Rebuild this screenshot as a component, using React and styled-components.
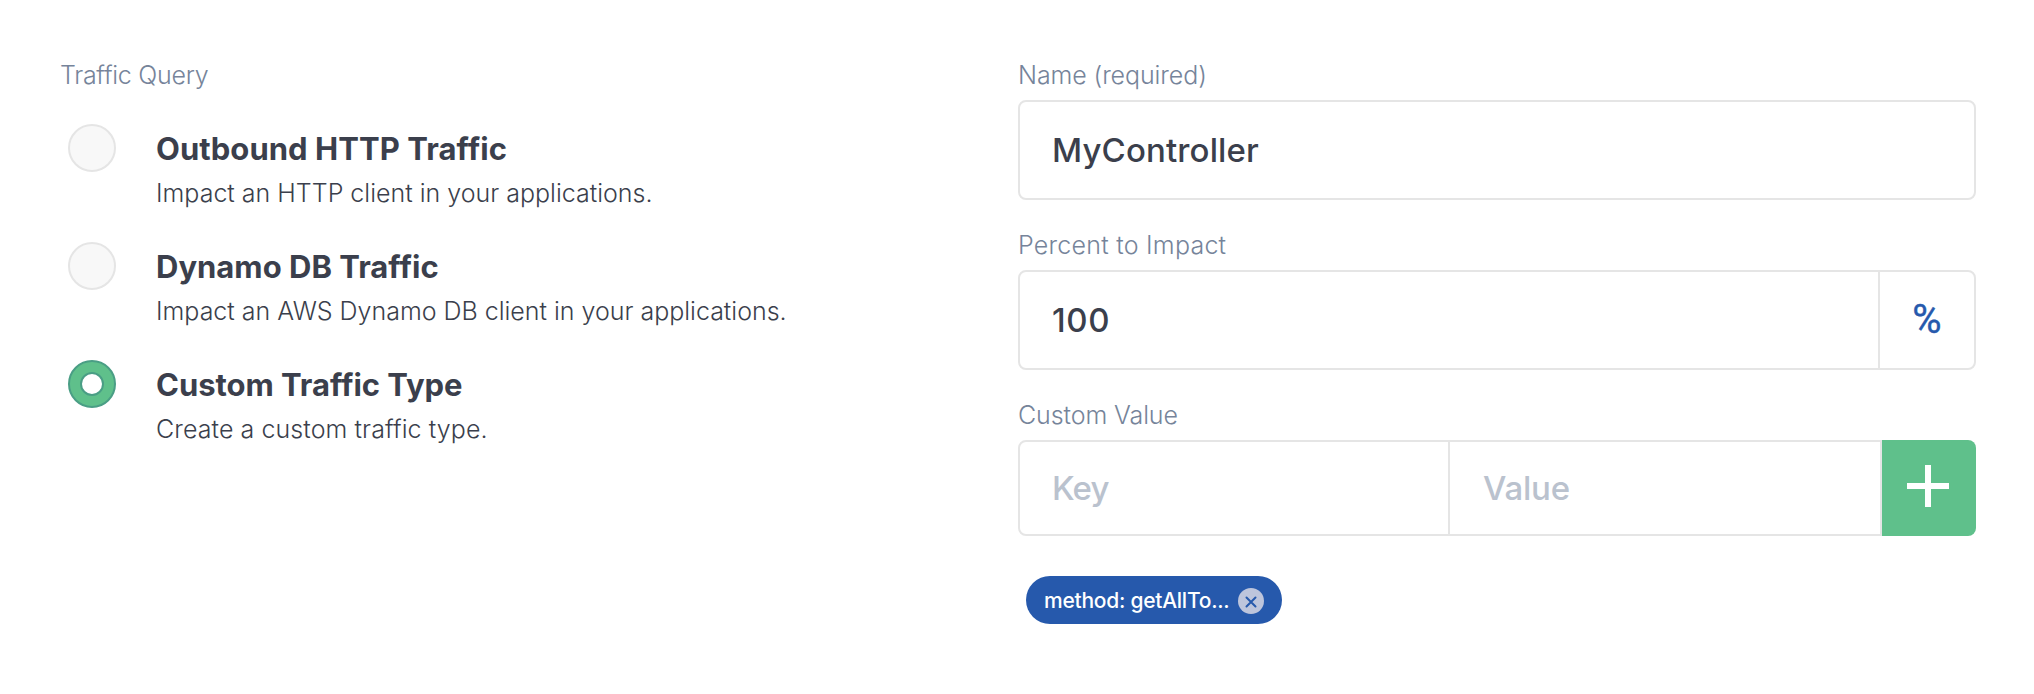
import { useState } from 'react';
import styled, { createGlobalStyle } from 'styled-components';

const trafficTypes = [
  { id: 'http', title: 'Outbound HTTP Traffic', text: 'Impact an HTTP client in your applications.', spacing: 0.05, textSpacing: 0 },
  { id: 'dynamo', title: 'Dynamo DB Traffic', text: 'Impact an AWS Dynamo DB client in your applications.', spacing: 0, textSpacing: -0.01 },
  { id: 'custom', title: 'Custom Traffic Type', text: 'Create a custom traffic type.', spacing: -0.05, textSpacing: 0.08 },
];

function App() {
  const [selected, setSelected] = useState('custom');
  const [name, setName] = useState('MyController');
  const [percent, setPercent] = useState('100');
  const [key, setKey] = useState('');
  const [value, setValue] = useState('');
  const [tags, setTags] = useState(['method: getAllTo...']);

  const addTag = () => {
    if (!key || !value) return;
    setTags([...tags, `${key}: ${value}`]);
    setKey('');
    setValue('');
  };

  const removeTag = (tag) => {
    setTags(tags.filter((t) => t !== tag));
  };

  return (
    <>
      <GlobalStyle />
      <Page>
        <section>
          <Label $spacing={-0.28}>Traffic Query</Label>
          <Options>
            {trafficTypes.map((type) => (
              <Option key={type.id} onClick={() => setSelected(type.id)}>
                <Radio $checked={selected === type.id}>
                  {selected === type.id && <Dot />}
                </Radio>
                <div>
                  <Title $spacing={type.spacing}>{type.title}</Title>
                  <Description $spacing={type.textSpacing}>{type.text}</Description>
                </div>
              </Option>
            ))}
          </Options>
        </section>
        <Form>
          <div>
            <Label $spacing={-0.1}>Name (required)</Label>
            <Field>
              <Input $spacing={0.13} value={name} onChange={(e) => setName(e.target.value)} />
            </Field>
          </div>
          <div>
            <Label $spacing={0.24}>Percent to Impact</Label>
            <Field>
              <Input $spacing={0.6} value={percent} onChange={(e) => setPercent(e.target.value)} />
              <Unit>%</Unit>
            </Field>
          </div>
          <div>
            <Label $spacing={-0.1}>Custom Value</Label>
            <PairRow>
              <PairField>
                <KeyInput $spacing={-0.8} placeholder="Key" value={key} onChange={(e) => setKey(e.target.value)} />
                <ValueInput $spacing={-0.2} placeholder="Value" value={value} onChange={(e) => setValue(e.target.value)} />
              </PairField>
              <AddButton onClick={addTag} aria-label="Add">
                <svg width="42" height="42" viewBox="0 0 42 42">
                  <path d="M18 0h6v18h18v6H24v18h-6V24H0v-6h18z" fill="#fff" />
                </svg>
              </AddButton>
            </PairRow>
            <Tags>
              {tags.map((tag) => (
                <Tag key={tag}>
                  <TagText>{tag}</TagText>
                  <RemoveButton onClick={() => removeTag(tag)} aria-label="Remove">
                    <svg width="12" height="12" viewBox="0 0 12 12">
                      <path d="M1.5 1.5l9 9M10.5 1.5l-9 9" stroke="#2659ac" strokeWidth="2" strokeLinecap="round" />
                    </svg>
                  </RemoveButton>
                </Tag>
              ))}
            </Tags>
          </div>
        </Form>
      </Page>
    </>
  );
}

// CSS
const GlobalStyle = createGlobalStyle`
  * {
    box-sizing: border-box;
  }
  body {
    margin: 0;
    background: #fff;
    color: #3b3f4c;
    font-family: Inter, "Liberation Sans", sans-serif;
  }
`;

const Page = styled.main`
  display: grid;
  grid-template-columns: repeat(2, minmax(0, 1fr));
  min-height: 694px;
  padding: 60px 58px 0 60px;
`;

const Label = styled.div`
  margin-bottom: 10px;
  font-size: 25px;
  font-weight: 300;
  line-height: 30px;
  letter-spacing: ${(props) => props.$spacing || 0}px;
  color: #76849a;
`;

const Options = styled.div`
  display: flex;
  flex-direction: column;
  gap: 34px;
  padding: 24px 0 0 8px;
`;

const Option = styled.div`
  display: flex;
  align-items: flex-start;
  gap: 40px;
  cursor: pointer;
`;

const Radio = styled.div`
  display: flex;
  align-items: center;
  justify-content: center;
  flex: none;
  width: 48px;
  height: 48px;
  border: 2px solid ${(props) => (props.$checked ? '#4a9e85' : '#e5e5e5')};
  border-radius: 50%;
  background: ${(props) => (props.$checked ? '#5fc08b' : '#f8f8f8')};
`;

const Dot = styled.div`
  width: 24px;
  height: 24px;
  border: 2px solid #4a9e85;
  border-radius: 50%;
  background: #fff;
`;

const Title = styled.div`
  padding-top: 7px;
  font-size: 31px;
  font-weight: 700;
  line-height: 36px;
  letter-spacing: ${(props) => props.$spacing}px;
`;

const Description = styled.div`
  margin-top: 11px;
  font-size: 25px;
  font-weight: 300;
  line-height: 30px;
  letter-spacing: ${(props) => props.$spacing}px;
`;

const Form = styled.section`
  display: flex;
  flex-direction: column;
  gap: 30px;
`;

const Field = styled.div`
  display: flex;
  height: 100px;
  border: 2px solid #e5e5e5;
  border-radius: 8px;
  background: #fff;
  overflow: hidden;
`;

const Input = styled.input`
  flex: 1;
  min-width: 0;
  padding: 0 32px;
  border: none;
  background: transparent;
  color: #3b3f4c;
  font-family: inherit;
  font-size: 33px;
  font-weight: 500;
  letter-spacing: ${(props) => props.$spacing}px;
  &:focus {
    outline: none;
  }
  &::placeholder {
    color: #bac2ce;
    opacity: 1;
  }
`;

const Unit = styled.div`
  display: flex;
  align-items: center;
  justify-content: center;
  width: 96px;
  padding-bottom: 2px;
  border-left: 2px solid #e5e5e5;
  color: #2659ac;
  font-family: Roboto, sans-serif;
  font-size: 40px;
  -webkit-text-stroke: 0.4px #2659ac;
`;

const PairRow = styled.div`
  display: flex;
  height: 96px;
`;

const PairField = styled(Field)`
  flex: 1;
  height: 96px;
  border-radius: 8px 0 0 8px;
`;

const KeyInput = styled(Input)`
  flex: none;
  width: 428px;
`;

const ValueInput = styled(Input)`
  padding-left: 33px;
  border-left: 2px solid #e5e5e5;
`;

const AddButton = styled.button`
  display: flex;
  align-items: center;
  justify-content: center;
  width: 94px;
  padding: 0 2px 4px 0;
  border: none;
  border-radius: 0 8px 8px 0;
  background: #5fc08b;
  cursor: pointer;
`;

const Tags = styled.div`
  display: flex;
  gap: 12px;
  padding: 40px 0 0 8px;
`;

const Tag = styled.div`
  display: flex;
  align-items: center;
  justify-content: space-between;
  width: 256px;
  height: 48px;
  padding: 0 18px;
  border-radius: 24px;
  background: #2659ac;
`;

const TagText = styled.span`
  color: #fff;
  font-size: 21px;
  font-weight: 500;
  letter-spacing: -0.25px;
`;

const RemoveButton = styled.button`
  display: flex;
  align-items: center;
  justify-content: center;
  width: 26px;
  height: 26px;
  margin-top: 2px;
  padding: 1px 0 0;
  border: none;
  border-radius: 50%;
  background: #bdc5dc;
  cursor: pointer;
`;

export default App;
